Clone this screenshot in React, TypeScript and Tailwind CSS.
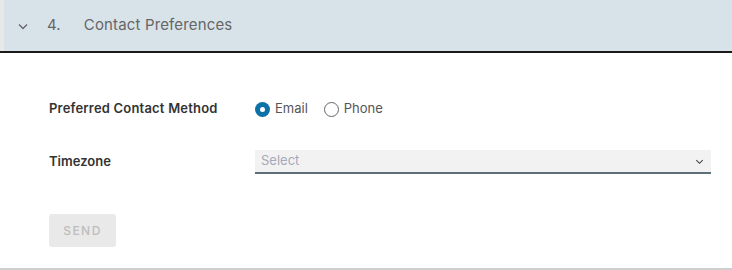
export default function App() {
  return (
    <div className="w-[732px] h-[270px] bg-white font-['Inter','Noto_Sans',sans-serif] flex flex-col">
      {/* Accordion header */}
      <div className="h-[53px] flex border-b-2 border-[#1a1a1a] bg-[#d8e3e9]">
        <div className="w-[4px] bg-[#e8e8e8]" />
        <div className="flex items-center pl-[13px] text-[15px] tracking-[0.01em] text-[#666]">
          <svg width="12" height="12" viewBox="0 0 12 12" className="mt-[1px]">
            <path d="M2 4.5 L6 8.5 L10 4.5" fill="none" stroke="#666" strokeWidth="1.3" />
          </svg>
          <span className="ml-[18px]">4.</span>
          <span className="ml-[23px]">Contact Preferences</span>
        </div>
      </div>

      {/* Form body */}
      <div className="flex-1 flex flex-col pl-[49px] pr-[21px] pt-[48px] border-b-2 border-[#cfcfcf]">
        <div className="flex items-center h-[16px]">
          <div className="w-[206px] text-[13px] tracking-[0.015em] font-semibold text-[#333]">Preferred Contact Method</div>
          <label className="flex items-center text-[13px] text-[#555]">
            <span className="w-[15px] h-[15px] rounded-full bg-[#0b72a8] flex items-center justify-center">
              <span className="w-[5px] h-[5px] rounded-full bg-white" />
            </span>
            <span className="ml-[5px]">Email</span>
          </label>
          <label className="flex items-center text-[13px] text-[#555] ml-[16px]">
            <span className="w-[15px] h-[15px] rounded-full border border-[#666] bg-white" />
            <span className="ml-[5px]">Phone</span>
          </label>
        </div>

        <div className="flex items-center mt-[33px]">
          <div className="w-[206px] text-[13px] font-semibold text-[#333]">Timezone</div>
          <div className="flex-1 h-[24px] bg-[#f2f2f2] border-b-2 border-[#5e6f7a] flex items-center justify-between pl-[6px] pr-[6px]">
            <span className="text-[13px] text-[#a8a8b8]">Select</span>
            <svg width="11" height="11" viewBox="0 0 12 12">
              <path d="M2.5 4.5 L6 8 L9.5 4.5" fill="none" stroke="#444" strokeWidth="1.2" />
            </svg>
          </div>
        </div>

        <button className="mt-[40px] w-[67px] h-[33px] rounded-[3px] bg-[#e9e9e9] text-[12px] tracking-[0.12em] text-[#bdbdbd] font-medium">
          SEND
        </button>
      </div>
    </div>
  );
}
